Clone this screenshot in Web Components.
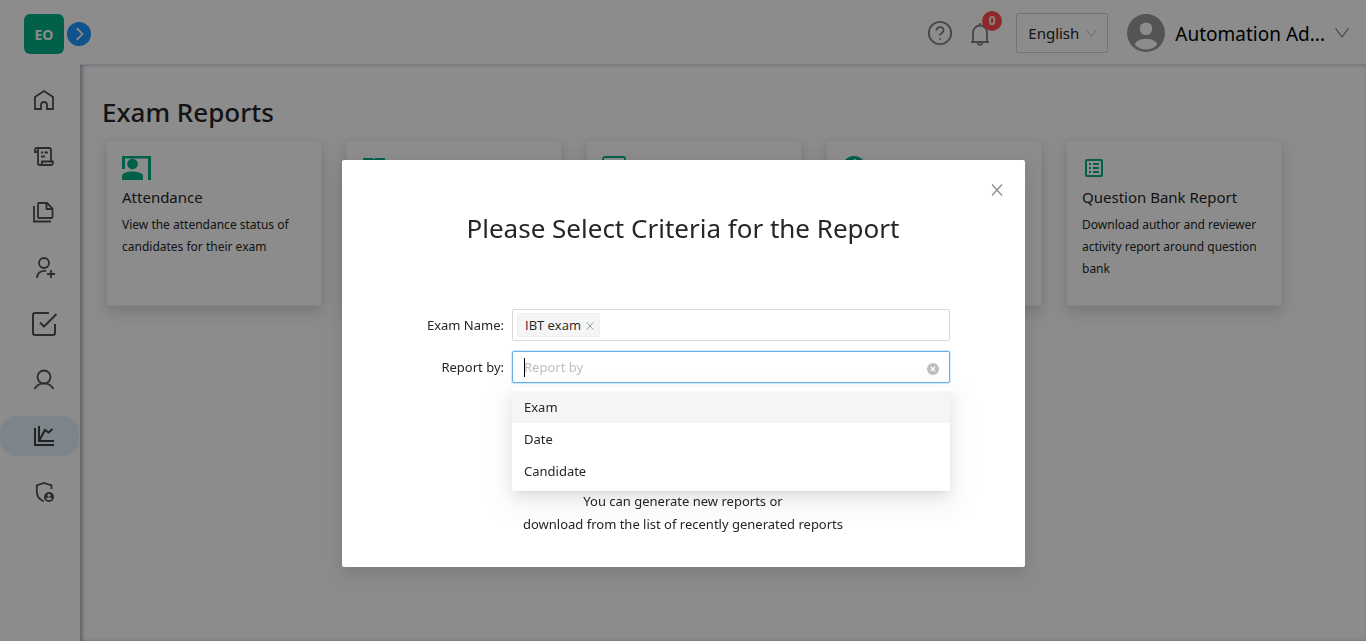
<!DOCTYPE html>
<html lang="en">
<head>
<meta charset="utf-8">
<meta name="viewport" content="width=device-width, initial-scale=1">
<title>Exam Reports</title>
<style>
  html, body { margin: 0; height: 100%; }
  body { font-family: "Noto Sans", "Open Sans", sans-serif; font-size: 13px; color: #262626; background: #fff; }
</style>
</head>
<body>
<reports-app></reports-app>

<script>
const ICONS = {
  home: '<path d="M3 9l9-6 9 6v12h-6v-4a3 3 0 0 0-6 0v4H3z"/>',
  scroll: '<path d="M6 8H3V5.5A1.5 1.5 0 0 1 4.5 4H17a2 2 0 0 1 2 2v11M6 5v14a2 2 0 0 0 2 2h11a1.800 1.800 0 0 0 1.800-2v-1.500H10V19a2 2 0 0 1-2 2M9 8.500h2M12.500 8.500h3.500M9 12.500h4"/>',
  pages: '<path d="M6 4a1 1 0 0 1 1-1h8l5.500 5.500V17a1 1 0 0 1-1 1H7a1 1 0 0 1-1-1zM14.500 3v6h6M2 6v15.500h17"/>',
  userPlus: '<circle cx="12" cy="7" r="5"/><path d="M5 22c0-5 3.500-7.500 9-7M19 14v8M15 18h8"/>',
  check: '<path stroke-width="2" d="M17 1H3a2 2 0 0 0-2 2v18a2 2 0 0 0 2 2h18a2 2 0 0 0 2-2v-9M8 10.500l4 4L24.500 2"/>',
  user: '<circle cx="12" cy="9" r="6.500"/><path d="M2.500 21c4-7.500 15-7.500 19 0"/>',
  chart: '<path stroke-width="2" d="M3 4v17h19M7 2v15h15M7 17l6-11 3.500 2.500L20.500 5"/>',
  shield: '<path d="M19.500 9V5.500L12 3 4.800 5.500v6c0 5 2.500 8 7 10"/><circle cx="17" cy="17" r="5" fill="currentColor" stroke="none"/><circle cx="17" cy="15.200" r="1.500" fill="#fff" stroke="none"/><path fill="#fff" stroke="none" d="M14 18.500c1-1.500 5-1.500 6 0-1 2-5 2-6 0z"/>',
  help: '<circle cx="12" cy="12" r="11.200"/><path d="M8.500 9.500c0-4.500 7-4.500 7 0 0 2.500-3.500 2.500-3.500 5"/><circle cx="12" cy="18" r="1" fill="currentColor" stroke="none"/>',
  bell: '<path d="M3 21h18M5 21v-9.500a7 7 0 0 1 14 0V21M12 2v2.500M10 22c0 2.500 4 2.500 4 0"/>',
  down: '<path stroke-width="2" d="M1 4l11 15L23 4"/>',
  right: '<path stroke-width="3" d="M8 2l10 10L8 22"/>',
  close: '<path stroke-width="2.500" d="M2 1l20 22M22 1L2 23"/>',
  clear: '<circle cx="12" cy="12" r="12" fill="currentColor" stroke="none"/><path stroke="#fff" stroke-width="2.500" d="M8 8l8 8M16 8l-8 8"/>',
  avatar: '<circle cx="12" cy="12" r="12" fill="currentColor" stroke="none"/><circle cx="12" cy="9.300" r="4" fill="#fff" stroke="none"/><path fill="#fff" stroke="none" d="M5 19.500c0-5 14-5 14 0-4 3.800-10 3.800-14 0z"/>',
  attendance: '<g fill="currentColor" stroke="none"><path d="M0 0h29v24h-3V2.500H3V13H0z"/><circle cx="10.500" cy="8" r="5.300"/><path d="M0 24v-4c0-6 21-6 21 0v4z"/></g>',
  book: '<path fill="currentColor" stroke="none" d="M1 2h9.500l1.500 1 1.500-1H23v17h-9l-2 2-2-2H1z"/>',
  panel: '<rect x="1" y="1" width="22" height="20" rx="2"/>',
  info: '<circle cx="12" cy="12" r="12" fill="currentColor" stroke="none"/><path stroke="#fff" d="M13 3v9"/>',
  list: '<rect x="4" y="4" width="16" height="16" rx="1" stroke-width="2"/><path stroke-width="2" d="M7 8h2M11 8h6M7 12h2M11 12h6M7 16h2M11 16h6"/>'
};

function define(name, html, setup) {
  const template = document.createElement('template');
  template.innerHTML = '<style>*{box-sizing:border-box}button,input,select{font:inherit;color:inherit}button{padding:0;border:0;background:none;cursor:pointer}</style>' + html;
  customElements.define(name, class extends HTMLElement {
    connectedCallback() {
      if (this.shadowRoot) return;
      this.attachShadow({ mode: 'open' }).append(template.content.cloneNode(true));
      if (setup) setup(this, this.shadowRoot);
    }
  });
}

define('ui-icon', `
  <style>
    :host { display: block; width: 24px; height: 24px; flex: none; }
    svg { display: block; width: 100%; height: 100%; overflow: visible; }
  </style>
  <svg viewBox="0 0 24 24" fill="none" stroke="currentColor" stroke-width="1.8" aria-hidden="true"></svg>`,
  (host, root) => {
    const svg = root.querySelector('svg');
    const name = host.getAttribute('name');
    if (name === 'attendance') svg.setAttribute('viewBox', '0 0 29 24');
    svg.innerHTML = ICONS[name];
  });

define('nav-item', `
  <style>
    :host { display: block; }
    a { display: flex; align-items: center; justify-content: center; height: 40px; padding-left: 8px; margin-right: 1px; border-radius: 16px; color: #505050; }
    :host([active]) a { background: #e2f2fb; color: #404040; }
  </style>
  <a href="#"></a>`,
  (host, root) => {
    const link = root.querySelector('a');
    const icon = document.createElement('ui-icon');
    icon.setAttribute('name', host.getAttribute('icon'));
    link.setAttribute('aria-label', host.getAttribute('label'));
    link.append(icon);
  });

define('side-bar', `
  <style>
    :host { display: block; position: relative; padding-top: 14px; background: #fff; }
    .logo { display: grid; place-items: center; width: 40px; height: 40px; margin: 0 0 26px 24px; border-radius: 6px; background: #00b088; color: #fff; font-family: "Open Sans", sans-serif; font-size: 14px; font-weight: 700; }
    .toggle { position: absolute; z-index: 1; left: 67px; top: 22px; display: grid; place-items: center; width: 24px; height: 24px; border-radius: 50%; background: #1e96ff; color: #fff; }
    .toggle ui-icon { width: 14px; height: 14px; }
    nav { display: grid; gap: 16px; }
  </style>
  <div class="logo">EO</div>
  <button class="toggle" aria-label="Expand menu"><ui-icon name="right"></ui-icon></button>
  <nav aria-label="Main">
    <nav-item icon="home" label="Home"></nav-item>
    <nav-item icon="scroll" label="Exams"></nav-item>
    <nav-item icon="pages" label="Documents"></nav-item>
    <nav-item icon="userPlus" label="Enrolment"></nav-item>
    <nav-item icon="check" label="Marking"></nav-item>
    <nav-item icon="user" label="Users"></nav-item>
    <nav-item icon="chart" label="Reports" active></nav-item>
    <nav-item icon="shield" label="Security"></nav-item>
  </nav>`);

define('top-bar', `
  <style>
    :host { display: flex; align-items: center; justify-content: flex-end; height: 65px; padding: 2px 17px 0 0; border-bottom: 1px solid #e4e8ea; background: #fff; color: #000; }
    .icon { color: #808080; margin-right: 16px; }
    .bell { position: relative; margin-right: 24px; }
    .badge { position: absolute; left: 14px; top: -10px; width: 20px; height: 20px; border-radius: 50%; background: #ff4d4f; color: #fff; font-size: 12px; font-weight: 600; line-height: 20px; text-align: center; }
    .lang { position: relative; display: flex; align-items: center; color: #bfbfbf; }
    select { appearance: none; width: 92px; height: 40px; padding: 0 11px; border: 1px solid #d0d0d0; border-radius: 2px; background: #fff; color: #262626; font-size: 15px; }
    .lang ui-icon { position: absolute; right: 11px; width: 11px; height: 11px; pointer-events: none; }
    .user { display: flex; align-items: center; gap: 10px; margin-left: 19px; font-size: 19px; line-height: 38px; }
    .user span { padding-top: 2px; }
    .user .face { width: 38px; height: 38px; color: #999; }
    .user .arrow { width: 14px; height: 14px; color: #808080; }
  </style>
  <button class="icon" aria-label="Help"><ui-icon name="help"></ui-icon></button>
  <button class="icon bell" aria-label="Notifications"><ui-icon name="bell"></ui-icon><span class="badge">0</span></button>
  <div class="lang"><select aria-label="Language"><option>English</option></select><ui-icon name="down"></ui-icon></div>
  <button class="user"><ui-icon class="face" name="avatar"></ui-icon><span>Automation Ad...</span><ui-icon class="arrow" name="down"></ui-icon></button>`);

define('report-card', `
  <style>
    :host { display: block; width: 216px; min-height: 166px; padding: 15px; border: 1px solid #f0f0f0; border-radius: 2px; background: #fff; box-shadow: 0 6px 16px rgba(0,0,0,.16); }
    ui-icon { color: #00b088; }
    ui-icon[name="attendance"] { width: 29px; }
    h2 { margin: 5px 0; font-size: 15px; line-height: 24px; font-weight: 400; }
    p { margin: 0; font-size: 12px; line-height: 22px; }
  </style>
  <slot name="icon"></slot><h2><slot name="title"></slot></h2><p><slot></slot></p>`,
  (host, root) => {
    const icon = document.createElement('ui-icon');
    icon.setAttribute('name', host.getAttribute('icon'));
    root.querySelector('slot[name="icon"]').replaceWith(icon);
  });

define('field-row', `
  <style>
    :host { display: grid; grid-template-columns: 88px minmax(0, 1fr); gap: 8px; align-items: center; }
    label { text-align: right; white-space: nowrap; }
    .box { position: relative; display: flex; align-items: center; height: 32px; padding: 0 10px 0 4px; border: 1px solid #d9d9d9; border-radius: 2px; background: #fff; }
    :host([active]) .box { border-color: #69b1ee; box-shadow: 0 0 0 1px #d6ebfb; padding-left: 11px; }
    input { flex: 1; min-width: 0; height: 30px; padding: 0; border: 0; outline: 0; background: none; }
    input::placeholder { color: #bfbfbf; opacity: 1; }
    .tag, .caret, .clear { display: none; }
    :host([tag]) .tag { display: flex; align-items: center; gap: 5px; height: 24px; padding: 0 5px 0 7px; border: 1px solid #f0f0f0; border-radius: 2px; background: #f5f5f5; font-family: "Open Sans", sans-serif; }
    .tag ui-icon { width: 8px; height: 8px; color: #8c8c8c; margin-top: 2px; }
    :host([active]) .caret { display: block; position: absolute; left: 11px; top: 6px; width: 1px; height: 19px; background: #000; }
    :host([active]) .clear { display: block; color: #bfbfbf; margin-top: 4px; }
    .clear ui-icon { width: 12px; height: 12px; }
  </style>
  <label for="field"></label>
  <div class="box">
    <span class="tag"><span class="value"></span><button type="button" aria-label="Remove"><ui-icon name="close"></ui-icon></button></span>
    <input id="field" autocomplete="off"><span class="caret"></span>
    <button type="button" class="clear" aria-label="Clear"><ui-icon name="clear"></ui-icon></button>
    <slot></slot>
  </div>`,
  (host, root) => {
    root.querySelector('label').textContent = host.getAttribute('label') + ':';
    root.querySelector('.value').textContent = host.getAttribute('tag') || '';
    root.querySelector('input').placeholder = host.getAttribute('placeholder') || '';
  });

define('option-list', `
  <style>
    :host { display: block; position: absolute; z-index: 2; left: -1px; right: -1px; top: 35px; padding: 4px 0; border-radius: 2px; background: #fff; box-shadow: 0 3px 6px -4px rgba(0,0,0,.12), 0 6px 16px rgba(0,0,0,.08), 0 9px 28px 8px rgba(0,0,0,.05); }
    ul { margin: 0; padding: 0; list-style: none; }
    li { padding: 0 12px; line-height: 32px; }
    li[aria-selected="true"] { background: #f5f5f5; }
  </style>
  <ul role="listbox" aria-label="Report by">
    <li role="option" aria-selected="true">Exam</li>
    <li role="option" aria-selected="false">Date</li>
    <li role="option" aria-selected="false">Candidate</li>
  </ul>`);

define('criteria-dialog', `
  <style>
    :host { position: fixed; inset: 0; z-index: 10; display: block; padding-top: 25vh; background: rgba(0,0,0,.45); }
    section { position: relative; width: 50%; margin: 0 auto; padding: 48px 24px 31px; border-radius: 2px; background: #fff; box-shadow: 0 6px 16px rgba(0,0,0,.08), 0 9px 28px 8px rgba(0,0,0,.05); }
    .close { position: absolute; right: 22px; top: 24px; color: #8c8c8c; }
    .close ui-icon { width: 12px; height: 12px; }
    h2 { margin: 0 0 61px; font-size: 26px; line-height: 40px; font-weight: 400; text-align: center; }
    form { display: grid; gap: 10px; max-width: 534px; margin: 0 auto 107px; }
    p { margin: 0; line-height: 23px; text-align: center; }
  </style>
  <section role="dialog" aria-modal="true" aria-labelledby="title">
    <button class="close" aria-label="Close"><ui-icon name="close"></ui-icon></button>
    <h2 id="title">Please Select Criteria for the Report</h2>
    <form>
      <field-row label="Exam Name" tag="IBT exam"></field-row>
      <field-row label="Report by" placeholder="Report by" active><option-list></option-list></field-row>
    </form>
    <p>You can generate new reports or<br>download from the list of recently generated reports</p>
  </section>`);

define('reports-app', `
  <style>
    :host { display: grid; grid-template-columns: 80px minmax(0, 1fr); grid-template-rows: auto 1fr; min-height: 100%; }
    side-bar { grid-row: 1 / 3; }
    main { padding: 27px 22px; background: #fff; box-shadow: inset 3px 0 4px -1px #a0a8b8, inset -2px 2px 1px -1px #f0f2f4; }
    h1 { margin: 0 0 8px; font-size: 26px; line-height: 40px; font-weight: 500; }
    .cards { display: flex; flex-wrap: wrap; gap: 24px; padding: 0 4px; }
  </style>
  <side-bar></side-bar>
  <top-bar></top-bar>
  <main>
    <h1>Exam Reports</h1>
    <div class="cards">
      <report-card icon="attendance"><span slot="title">Attendance</span>View the attendance status of candidates for their exam</report-card>
      <report-card icon="book"></report-card>
      <report-card icon="panel"></report-card>
      <report-card icon="info"></report-card>
      <report-card icon="list"><span slot="title">Question Bank Report</span>Download author and reviewer activity report around question bank</report-card>
    </div>
  </main>
  <criteria-dialog></criteria-dialog>`);
</script>
</body>
</html>
